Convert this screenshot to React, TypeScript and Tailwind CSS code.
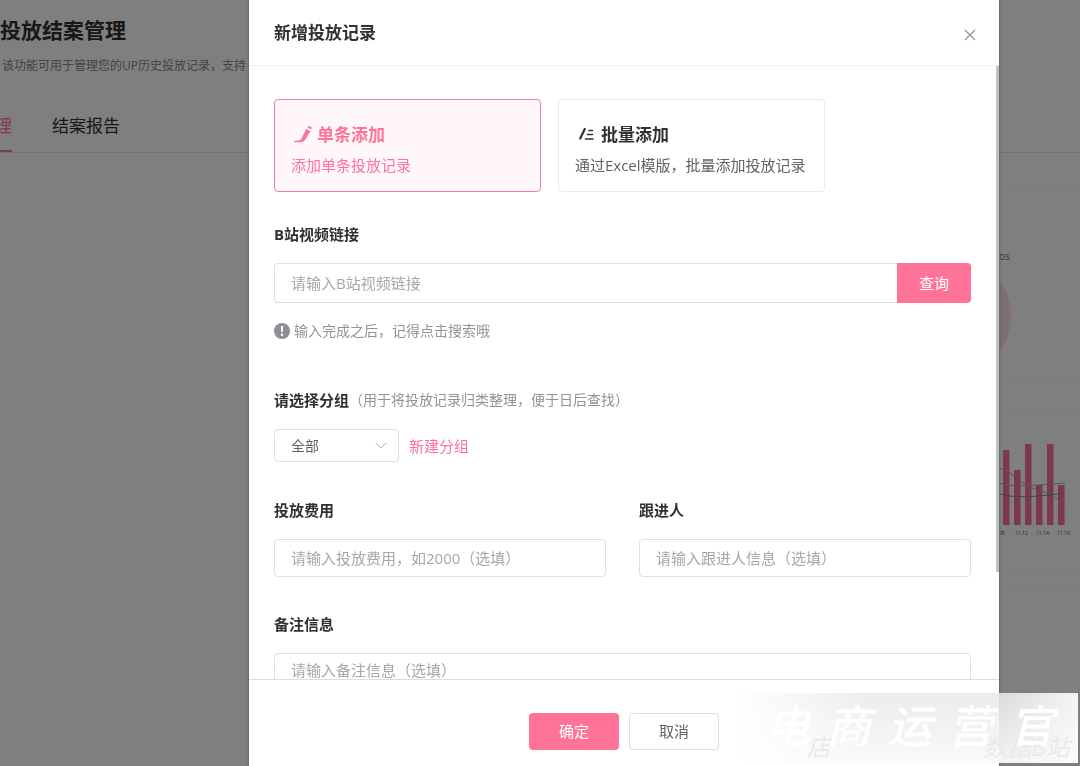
import type { ReactNode } from "react";

const bars = [
  { x: 4, y: 10 },
  { x: 15, y: 30 },
  { x: 26, y: 4 },
  { x: 37, y: 45 },
  { x: 48, y: 4 },
  { x: 59, y: 45 },
];

const fieldClass =
  "w-full rounded border border-[#dcdfe6] bg-white px-4 text-[15px] text-[#606266] outline-none placeholder:text-[#a4a7ad]";

function PencilIcon() {
  return (
    <svg viewBox="0 0 20 20" className="size-5" fill="currentColor" aria-hidden="true">
      <path d="M14.600 2.300l.8-1c.3-.4.7-.4 1.100-.2l1.900 1.100c.4.3.5.700.2 1.100l-.7 1.100z" />
      <path d="M13.400 3.700l4 2.500-4.900 8.100c-1.300 2-3.100 2.900-5.300 2.900H1.600c-.8 0-.8-1.200 0-1.300l4-.5c1.400-.2 2.200-.8 2.800-2z" />
    </svg>
  );
}

function BatchIcon() {
  return (
    <svg
      viewBox="0 0 20 20"
      className="size-5"
      fill="none"
      stroke="currentColor"
      strokeLinecap="round"
      aria-hidden="true"
    >
      <path d="M7.800 4L3.200 13.500" strokeWidth="2.200" />
      <path d="M12 5.500h3.500M10.500 9.500h5M8.500 14h7.500" strokeWidth="1.600" />
    </svg>
  );
}

function ModeCard({
  active,
  icon,
  title,
  text,
}: {
  active?: boolean;
  icon: ReactNode;
  title: string;
  text: string;
}) {
  return (
    <button
      type="button"
      aria-pressed={!!active}
      className={
        active
          ? "flex h-[93px] flex-1 flex-col justify-center rounded border border-[#f27da0] bg-[#fff7fa] px-4 pt-1.5 text-left text-[#ff7399]"
          : "flex h-[93px] flex-1 flex-col justify-center rounded border border-[#ebebed] bg-white px-4 pt-1.5 text-left text-[#303133]"
      }
    >
      <span className="flex items-center gap-1 pl-0.5 text-[17px] leading-6 font-bold">
        {icon}
        {title}
      </span>
      <span className={active ? "mt-2 text-[15px] leading-5" : "mt-2 text-[15px] leading-5 text-[#606266]"}>
        {text}
      </span>
    </button>
  );
}

function Backdrop() {
  return (
    <div className="flex min-h-screen flex-col bg-white text-[#303133]" aria-hidden="true">
      <header className="border-b border-[#e4e7ed]">
        <h1 className="pt-4 text-[21px] leading-7 font-bold">投放结案管理</h1>
        <p className="mt-3 pl-0.5 text-[12px] leading-5 text-[#84868c]">
          该功能可用于管理您的UP历史投放记录，支持
        </p>
        <nav className="mt-8 flex h-11 gap-10 text-[17px] leading-9">
          <span className="flex w-3 justify-end overflow-hidden border-b-2 border-[#ff7399] text-[#ff7399]">理</span>
          <span>结案报告</span>
        </nav>
      </header>
      <section className="ml-auto flex w-20 flex-col pt-8">
        <div className="h-[196px] border-y border-[#f8f8f8]">
          <svg viewBox="0 0 80 194" className="w-20">
            <text x="-1" y="74" fontSize="10" fill="#666">
              os
            </text>
            <circle cx="-53" cy="130" r="64" fill="#ffdce5" />
          </svg>
        </div>
        <div className="mt-[30px] h-[162px] border-y border-[#f8f8f8]">
          <svg viewBox="0 0 80 160" className="w-20">
            <g transform="translate(-1 28)">
              {bars.map((b) => (
                <rect key={b.x} x={b.x} y={b.y} width="6.500" height={85 - b.y} fill="#ff6f96" />
              ))}
              <g fill="none" strokeWidth="1">
                <path d="M0 28C12 30 22 45 36 49S54 57 66 63" stroke="#c99a80" />
                <path d="M0 43C16 48 38 45 66 43" stroke="#93b3c0" />
                <path d="M0 54C18 59 44 56 66 53" stroke="#7f84b8" />
              </g>
              <g fontSize="5" fill="#555">
                <text x="0" y="95">08</text>
                <text x="16" y="95">11.12</text>
                <text x="37" y="95">11.14</text>
                <text x="58" y="95">11.16</text>
              </g>
            </g>
          </svg>
        </div>
        <div className="mt-3 border-t border-[#f4f4f4]" />
      </section>
    </div>
  );
}

function Watermark() {
  return (
    <div className="pointer-events-none absolute right-0.5 bottom-[3px] flex h-[70px] w-[345px] items-center justify-end overflow-hidden bg-linear-to-r from-white/0 via-[#ececec] via-40% to-[#ececec] pr-6 select-none">
      <div className="absolute inset-y-0 right-0 w-[79px] bg-linear-to-r from-[#dadada] to-[#f4f4f4]" />
      <div className="absolute inset-0 bg-linear-to-b from-white/0 to-white/70" />
      <div className="absolute right-2 bottom-0 left-[74px] flex justify-between text-[24px] leading-8 text-[#e9e9e9] italic">
        <span>店</span>
        <span>数据B站</span>
      </div>
      <div className="relative flex gap-4 pb-1 text-[45px] font-medium text-white italic">
        <span>电</span>
        <span>商</span>
        <span>运</span>
        <span>营</span>
        <span>官</span>
      </div>
    </div>
  );
}

export default function App() {
  return (
    <div className="relative min-h-screen overflow-hidden font-['Open_Sans','Noto_Sans_CJK_SC',sans-serif]">
      <Backdrop />
      <div className="fixed inset-0 flex bg-black/50 pr-[81px] pl-[249px]">
        <div
          role="dialog"
          aria-modal="true"
          aria-labelledby="dialog-title"
          className="flex min-w-0 flex-1 flex-col bg-white shadow-[0_0_3px_rgba(0,0,0,0.4)]"
        >
          <div className="flex h-[66px] shrink-0 items-center justify-between border-b border-[#f0f0f0] pr-[22px] pl-[25px]">
            <h2 id="dialog-title" className="text-[17px] font-bold text-[#303133]">
              新增投放记录
            </h2>
            <button type="button" aria-label="关闭" className="pt-1 text-[#909399]">
              <svg viewBox="0 0 14 14" className="size-3.5" fill="none" stroke="currentColor" strokeWidth="1.200">
                <path d="M2 2l10 10M12 2L2 12" />
              </svg>
            </button>
          </div>

          <div className="relative min-h-0 flex-1">
            <div className="h-full overflow-y-auto pt-[33px] pr-[28px] pl-[25px] text-[15px] leading-5 text-[#303133] [scrollbar-width:none]">
              <div className="flex gap-[17px] pr-[146px]">
                <ModeCard active icon={<PencilIcon />} title="单条添加" text="添加单条投放记录" />
                <ModeCard icon={<BatchIcon />} title="批量添加" text="通过Excel模版，批量添加投放记录" />
              </div>

              <label htmlFor="link" className="mt-8 block font-bold">
                B站视频链接
              </label>
              <div className="mt-[19px] flex h-10">
                <input id="link" placeholder="请输入B站视频链接" className={fieldClass + " rounded-r-none border-r-0"} />
                <button type="button" className="w-[74px] shrink-0 rounded-r bg-[#ff7399] text-white">
                  查询
                </button>
              </div>
              <p className="mt-[18px] flex items-center gap-1 text-[14px] text-[#909399]">
                <svg viewBox="0 0 16 16" className="size-4" aria-hidden="true">
                  <circle cx="8" cy="8" r="8" fill="#8b8e94" />
                  <path d="M6.800 3h2.400l-.5 6.200H7.300z" fill="#fff" />
                  <circle cx="8" cy="11.800" r="1.200" fill="#fff" />
                </svg>
                输入完成之后，记得点击搜索哦
              </p>

              <div className="mt-[49px] flex items-center">
                <label htmlFor="group" className="font-bold">
                  请选择分组
                </label>
                <span className="text-[14px] text-[#909399]">（用于将投放记录归类整理，便于日后查找）</span>
              </div>
              <div className="mt-[19px] flex items-center gap-2.5">
                <div className="relative h-[33px] w-[125px]">
                  <select
                    id="group"
                    className="h-full w-full appearance-none rounded border border-[#dcdfe6] bg-white px-4 text-[14px] text-[#606266] outline-none"
                  >
                    <option>全部</option>
                  </select>
                  <svg
                    viewBox="0 0 12 12"
                    className="pointer-events-none absolute top-2.5 right-3 size-3"
                    fill="none"
                    stroke="#b4b8c0"
                    aria-hidden="true"
                  >
                    <path d="M.5 3.500L6 9l5.500-5.500" />
                  </svg>
                </div>
                <a href="#new-group" className="text-[#ff7399]">
                  新建分组
                </a>
              </div>

              <div className="mt-[38px] grid grid-cols-2 gap-[33px]">
                <div>
                  <label htmlFor="cost" className="block font-bold">
                    投放费用
                  </label>
                  <input id="cost" placeholder="请输入投放费用，如2000（选填）" className={fieldClass + " mt-[19px] h-[38px]"} />
                </div>
                <div>
                  <label htmlFor="owner" className="block font-bold">
                    跟进人
                  </label>
                  <input id="owner" placeholder="请输入跟进人信息（选填）" className={fieldClass + " mt-[19px] h-[38px]"} />
                </div>
              </div>

              <label htmlFor="note" className="mt-[37px] block font-bold">
                备注信息
              </label>
              <textarea
                id="note"
                placeholder="请输入备注信息（选填）"
                className={fieldClass + " mt-[19px] block h-[120px] resize-none py-1.5"}
              />
            </div>
            <div className="absolute top-0 right-0 h-[506px] w-[3px] bg-[#c0c2c4]" />
          </div>

          <div className="flex h-[87px] shrink-0 items-center justify-center gap-2.5 border-t border-[#dcdcdc] pt-4 text-[15px]">
            <button type="button" className="h-[37px] w-[90px] rounded bg-[#ff7399] text-white">
              确定
            </button>
            <button
              type="button"
              className="h-[37px] w-[90px] rounded border border-[#dcdfe6] bg-white text-[#606266]"
            >
              取消
            </button>
          </div>
        </div>
        <Watermark />
      </div>
    </div>
  );
}
